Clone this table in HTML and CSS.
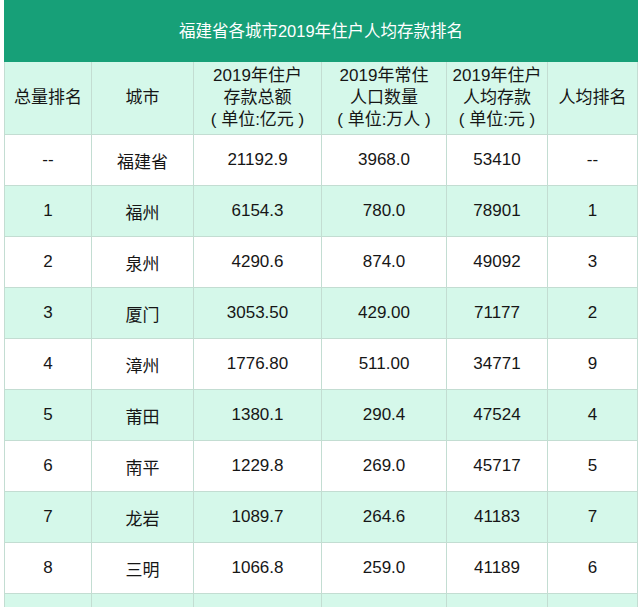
FILE: index.html
```html
<!DOCTYPE html>
<html lang="zh-CN">
<head>
<meta charset="utf-8">
<title>福建省各城市2019年住户人均存款排名</title>
<link rel="stylesheet" href="styles.css">
</head>
<body>
<table class="rank">
  <colgroup>
    <col class="c1"><col class="c2"><col class="c3"><col class="c4"><col class="c5"><col class="c6">
  </colgroup>
  <thead>
    <tr><th class="title" colspan="6">福建省各城市2019年住户人均存款排名</th></tr>
    <tr class="head">
      <th>总量排名</th>
      <th>城市</th>
      <th>2019年住户<br>存款总额<br>( 单位:亿元 )</th>
      <th>2019年常住<br>人口数量<br>( 单位:万人 )</th>
      <th>2019年住户<br>人均存款<br>( 单位:元 )</th>
      <th>人均排名</th>
    </tr>
  </thead>
  <tbody>
    <tr><td>--</td><td>福建省</td><td>21192.9</td><td>3968.0</td><td>53410</td><td>--</td></tr>
    <tr class="alt"><td>1</td><td>福州</td><td>6154.3</td><td>780.0</td><td>78901</td><td>1</td></tr>
    <tr><td>2</td><td>泉州</td><td>4290.6</td><td>874.0</td><td>49092</td><td>3</td></tr>
    <tr class="alt"><td>3</td><td>厦门</td><td>3053.50</td><td>429.00</td><td>71177</td><td>2</td></tr>
    <tr><td>4</td><td>漳州</td><td>1776.80</td><td>511.00</td><td>34771</td><td>9</td></tr>
    <tr class="alt"><td>5</td><td>莆田</td><td>1380.1</td><td>290.4</td><td>47524</td><td>4</td></tr>
    <tr><td>6</td><td>南平</td><td>1229.8</td><td>269.0</td><td>45717</td><td>5</td></tr>
    <tr class="alt"><td>7</td><td>龙岩</td><td>1089.7</td><td>264.6</td><td>41183</td><td>7</td></tr>
    <tr><td>8</td><td>三明</td><td>1066.8</td><td>259.0</td><td>41189</td><td>6</td></tr>
    <tr class="alt"><td></td><td></td><td></td><td></td><td></td><td></td></tr>
  </tbody>
</table>
</body>
</html>
```

FILE: styles.css
```css
html, body {
  margin: 0;
  padding: 0;
  background: #ffffff;
}

body {
  font-family: "Liberation Sans", "Noto Sans CJK SC", sans-serif;
  color: #161616;
  overflow: hidden;
}

.rank {
  margin: 0 0 0 4px;
  width: 633px;
  table-layout: fixed;
  border-collapse: collapse;
  font-size: 17px;
}

.c1 { width: 87px; }
.c2 { width: 102px; }
.c3 { width: 128px; }
.c4 { width: 125px; }
.c5 { width: 101px; }
.c6 { width: 90px; }

.rank th,
.rank td {
  border: 1px solid #c3ddd2;
  text-align: center;
  vertical-align: middle;
  padding: 0;
  font-weight: normal;
}

.rank .title {
  background: #17a078;
  color: #ffffff;
  font-size: 16.5px;
  height: 61px;
  border-color: #17a078;
  padding-bottom: 3px;
  box-sizing: border-box;
}

.head th {
  background: #d5f8ea;
  height: 72px;
  line-height: 22px;
}

.rank td {
  height: 50px;
}

.alt td {
  background: #d5f8ea;
}
```
